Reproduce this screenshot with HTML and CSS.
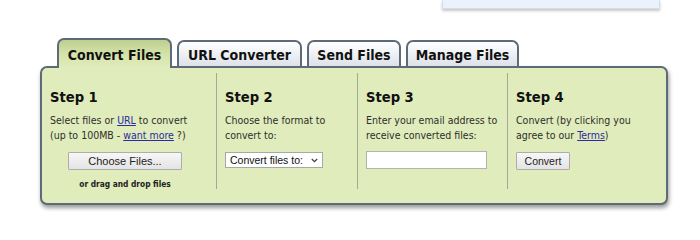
FILE: index.html
```html
<!DOCTYPE html>
<html lang="en">
<head>
<meta charset="utf-8">
<title>Convert Files</title>
<link rel="stylesheet" href="styles.css">
</head>
<body>
<div class="page">
  <div class="topbox"></div>
  <div class="converter">
    <div class="tabs">
      <div class="tab active t1">Convert Files</div>
      <div class="tab t2">URL Converter</div>
      <div class="tab t3">Send Files</div>
      <div class="tab t4">Manage Files</div>
    </div>
    <div class="panel">
      <div class="step s1">
        <h2>Step 1</h2>
        <p>Select files or <a href="#">URL</a> to convert<br>(up to 100MB - <a href="#">want more</a> ?)</p>
        <button class="btn choose" type="button">Choose Files...</button>
        <div class="drag">or drag and drop files</div>
      </div>
      <div class="step">
        <h2>Step 2</h2>
        <p>Choose the format to<br>convert to:</p>
        <div class="select"><span>Convert files to:</span><svg class="chev" width="7" height="5" viewBox="0 0 7 5"><path d="M0.8 1 L3.5 3.7 L6.2 1" fill="none" stroke="#444" stroke-width="1.3"/></svg></div>
      </div>
      <div class="step">
        <h2>Step 3</h2>
        <p>Enter your email address to<br>receive converted files:</p>
        <div class="email"></div>
      </div>
      <div class="step">
        <h2>Step 4</h2>
        <p>Convert (by clicking you<br>agree to our <a href="#">Terms</a>)</p>
        <button class="btn convert" type="button">Convert</button>
      </div>
    </div>
  </div>
</div>
</body>
</html>
```

FILE: styles.css
```css
html, body {
  margin: 0;
  padding: 0;
  background: #ffffff;
}
body {
  font-family: "DejaVu Sans Condensed", "DejaVu Sans", sans-serif;
}
.page {
  width: 700px;
  height: 214px;
  overflow: hidden;
}
.topbox {
  margin-left: 442px;
  width: 218px;
  height: 9px;
  box-sizing: border-box;
  background: #eaf3fc;
  border: 1px solid #d5dfea;
  border-top: 0;
  box-shadow: 0 2px 3px rgba(0, 0, 0, 0.22);
}
.converter {
  margin: 29px 0 0 40px;
  width: 628px;
}
.tabs {
  display: flex;
  align-items: flex-end;
  gap: 5px;
  padding-left: 17px;
}
.tab {
  box-sizing: border-box;
  flex: none;
  height: 26px;
  padding-top: 5px;
  border: 2px solid #5d6a78;
  border-bottom: 0;
  border-radius: 7px 7px 0 0;
  background: linear-gradient(#ffffff, #dde2e9);
  color: #111;
  font-weight: bold;
  font-size: 14px;
  line-height: 17px;
  text-align: center;
  white-space: nowrap;
}
.tab.active {
  position: relative;
  z-index: 1;
  height: 30px;
  margin-bottom: -2px;
  padding-top: 7px;
  background: linear-gradient(#bfcf8f, #d6e4ab 55%, #e0ecbb);
}
.t1 { width: 115px; }
.t2 { width: 125px; }
.t3 { width: 94px; }
.t4 { width: 113px; }
.panel {
  box-sizing: border-box;
  height: 139px;
  padding-top: 5px;
  border: 2px solid #5d6a78;
  border-radius: 7px;
  background: #e0ecbb;
  box-shadow: 1px 3px 4px rgba(0, 0, 0, 0.4);
  display: grid;
  grid-template-columns: 174px 141px 150px 1fr;
  align-items: start;
}
.step {
  box-sizing: border-box;
  height: 116px;
  padding: 15px 0 0 8px;
}
.step + .step {
  border-left: 1px solid #a2a994;
}
.s1 {
  padding-right: 16px;
}
h2 {
  margin: 0;
  font-size: 14.6px;
  line-height: 18px;
  font-weight: bold;
  color: #111;
}
p {
  margin: 7px 0 0;
  font-size: 10.5px;
  line-height: 15px;
  color: #2e2e2e;
  white-space: nowrap;
}
a {
  color: #2b2ba3;
  text-decoration: underline;
}
.btn {
  box-sizing: border-box;
  display: block;
  height: 18px;
  padding: 0;
  margin-top: 9px;
  border: 1px solid #adadad;
  border-radius: 1px;
  background: linear-gradient(#f7f7f7, #e4e4e4);
  color: #222;
  font-family: "Liberation Sans", Arial, sans-serif;
  font-size: 11px;
  line-height: 16px;
}
.choose {
  width: 114px;
  margin-left: auto;
  margin-right: auto;
}
.convert {
  width: 54px;
  font-size: 10.5px;
}
.drag {
  margin-top: 8px;
  font-size: 8.3px;
  line-height: 12px;
  font-weight: bold;
  color: #222;
  text-align: center;
  white-space: nowrap;
}
.select {
  box-sizing: border-box;
  width: 98px;
  height: 16px;
  margin-top: 9px;
  padding: 0 4px 0 4px;
  border: 1px solid #a8a8a8;
  background: #ffffff;
  display: flex;
  align-items: center;
  justify-content: space-between;
  color: #111;
  font-family: "Liberation Sans", Arial, sans-serif;
  font-size: 10.5px;
  line-height: 14px;
  white-space: nowrap;
}
.chev {
  display: block;
}
.email {
  box-sizing: border-box;
  width: 121px;
  height: 18px;
  margin-top: 8px;
  border: 1px solid #b3b3b3;
  background: #ffffff;
}
```
